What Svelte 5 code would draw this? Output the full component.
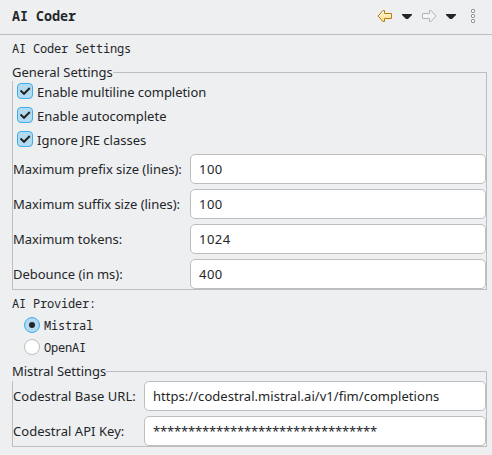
<script>
  let general = $state([
    { label: 'Maximum prefix size (lines):', value: '100' },
    { label: 'Maximum suffix size (lines):', value: '100' },
    { label: 'Maximum tokens:', value: '1024' },
    { label: 'Debounce (in ms):', value: '400' }
  ]);
  let mistral = $state([
    { label: 'Codestral Base URL:', value: 'https://codestral.mistral.ai/v1/fim/completions' },
    { label: 'Codestral API Key:', value: '********************************', secret: true }
  ]);
  let checks = $state([
    { label: 'Enable multiline completion', on: true },
    { label: 'Enable autocomplete', on: true },
    { label: 'Ignore JRE classes', on: true }
  ]);
  let provider = $state('Mistral');
</script>

{#snippet fields(rows)}
  {#each rows as row}
    <label class="row"><span class="name">{row.label}</span><input type="text" class:secret={row.secret} bind:value={row.value} spellcheck="false" /></label>
  {/each}
{/snippet}

<main>
  <header>
    <h1>AI Coder</h1>
    <svg class="tools" width="108" height="20" viewBox="0 0 108 20">
      <defs>
        <linearGradient id="gold" x1="0" y1="0" x2="0" y2="1">
          <stop offset="0" stop-color="#fffbe6" /><stop offset="1" stop-color="#fbdc83" />
        </linearGradient>
      </defs>
      <path d="M2 10 L7 4.500 H8.500 V7.500 H15.500 V12.500 H8.500 V15.500 H7 Z" fill="url(#gold)" stroke="#b87a12" />
      <path d="M26 8 H36 V9 L32 13 H30 L26 9 Z" fill="#232629" />
      <path d="M60 10 L55 4.500 H53.500 V7.500 H46.500 V12.500 H53.500 V15.500 H55 Z" fill="#f3f3f3" stroke="#b4b4b4" />
      <path d="M70 8 H80 V9 L76 13 H74 L70 9 Z" fill="#232629" />
      <g fill="#fff" stroke="#77797b">
        <rect x="95.500" y="3.500" width="3" height="3" rx="1" />
        <rect x="95.500" y="8.500" width="3" height="3" rx="1" />
        <rect x="95.500" y="13.500" width="3" height="3" rx="1" />
      </g>
    </svg>
  </header>

  <div class="mono heading">AI Coder Settings</div>

  <section class="group general">
    <div class="legend"><span>General Settings</span></div>
    <div class="checks">
      {#each checks as c}
        <label class="check">
          <input type="checkbox" bind:checked={c.on} />
          <svg width="16" height="16" viewBox="0 0 16 16">
            <rect x=".5" y=".5" width="15" height="15" rx="3.500" fill={c.on ? '#b3daf1' : '#fff'} stroke={c.on ? '#3daee9' : '#bcbebf'} />
            {#if c.on}<path d="M3.500 7.500 L7 10.800 L12.800 5" fill="none" stroke="#232629" stroke-width="2" />{/if}
          </svg>
          <span>{c.label}</span>
        </label>
      {/each}
    </div>
    {@render fields(general)}
  </section>

  <div class="mono provider">AI Provider:</div>
  <div class="radios">
    {#each ['Mistral', 'OpenAI'] as p}
      <label class="radio mono">
        <input type="radio" value={p} bind:group={provider} />
        <svg width="16" height="16" viewBox="0 0 16 16">
          <circle cx="8" cy="8" r="7.500" fill={provider === p ? '#b3daf1' : '#fff'} stroke={provider === p ? '#3daee9' : '#bcbebf'} />
          {#if provider === p}<circle cx="8" cy="8" r="3" fill="#232629" />{/if}
        </svg>
        <span>{p}</span>
      </label>
    {/each}
  </div>

  <section class="group mistral">
    <div class="legend"><span>Mistral Settings</span></div>
    {@render fields(mistral)}
  </section>
</main>

<style>
  :global(body) { margin: 0; background: #eeeff1; }
  main {
    width: 492px; height: 455px; overflow: hidden;
    background: #eeeff1; color: #232629;
    font: 13px/18px "Noto Sans", sans-serif;
  }
  header {
    display: flex; align-items: center; justify-content: space-between;
    box-sizing: border-box; height: 35px; padding: 0 8px 3px 12px;
    border-bottom: 1px solid #bcbec0;
  }
  h1 { margin: 0; font: bold 13.333px/18px "Noto Sans Mono", "DejaVu Sans Mono", monospace; }
  .mono { font: 12px/18px "Noto Sans Mono", "DejaVu Sans Mono", monospace; letter-spacing: -0.2px; white-space: pre; }
  .heading { padding: 5px 0 0 12px; }
  .group {
    box-sizing: border-box; width: 475px; margin-left: 12px;
    border: 1px solid #bcbec0; border-top: 0;
  }
  .legend { display: flex; height: 18px; margin: 0 -1px; background: #eeeff1; }
  .legend::after { content: ""; flex: 1; margin-top: 9px; border-top: 1px solid #bcbec0; border-right: 1px solid #bcbec0; }
  .general { margin-top: 5px; height: 227px; }
  .checks { display: flex; flex-direction: column; height: 73px; padding-left: 4px; }
  .check { display: flex; height: 24px; }
  .check svg { margin: 2px 4px 0 0; }
  .check span { margin-top: 2px; }
  .check:first-child span { letter-spacing: -0.05px; }
  .check input, .radio input { position: absolute; opacity: 0; pointer-events: none; margin: 0; }
  .row { display: flex; align-items: center; height: 30px; margin-bottom: 5px; }
  .name { width: 177px; white-space: nowrap; }
  .general .name { letter-spacing: -0.03px; }
  .mistral .name { width: 131px; letter-spacing: 0.04px; }
  .row input {
    flex: 1; min-width: 0; box-sizing: border-box; height: 30px; padding: 0 8px;
    border: 1px solid #bcbec0; border-radius: 5px; background: #fff;
    font: inherit; color: inherit; outline: none; letter-spacing: 0.04px;
  }
  .general .row input { letter-spacing: 0.5px; }
  .row input.secret { letter-spacing: -0.16px; }
  .provider { padding: 5px 0 0 12px; }
  .radios { padding: 4px 0 0 24px; }
  .radio { display: flex; height: 22px; }
  .radio svg { margin-right: 4px; }
  .mistral { margin-top: 1px; height: 85px; }
  .mistral .legend { height: 19px; }
  .mistral .legend span { letter-spacing: -0.03px; }
</style>
